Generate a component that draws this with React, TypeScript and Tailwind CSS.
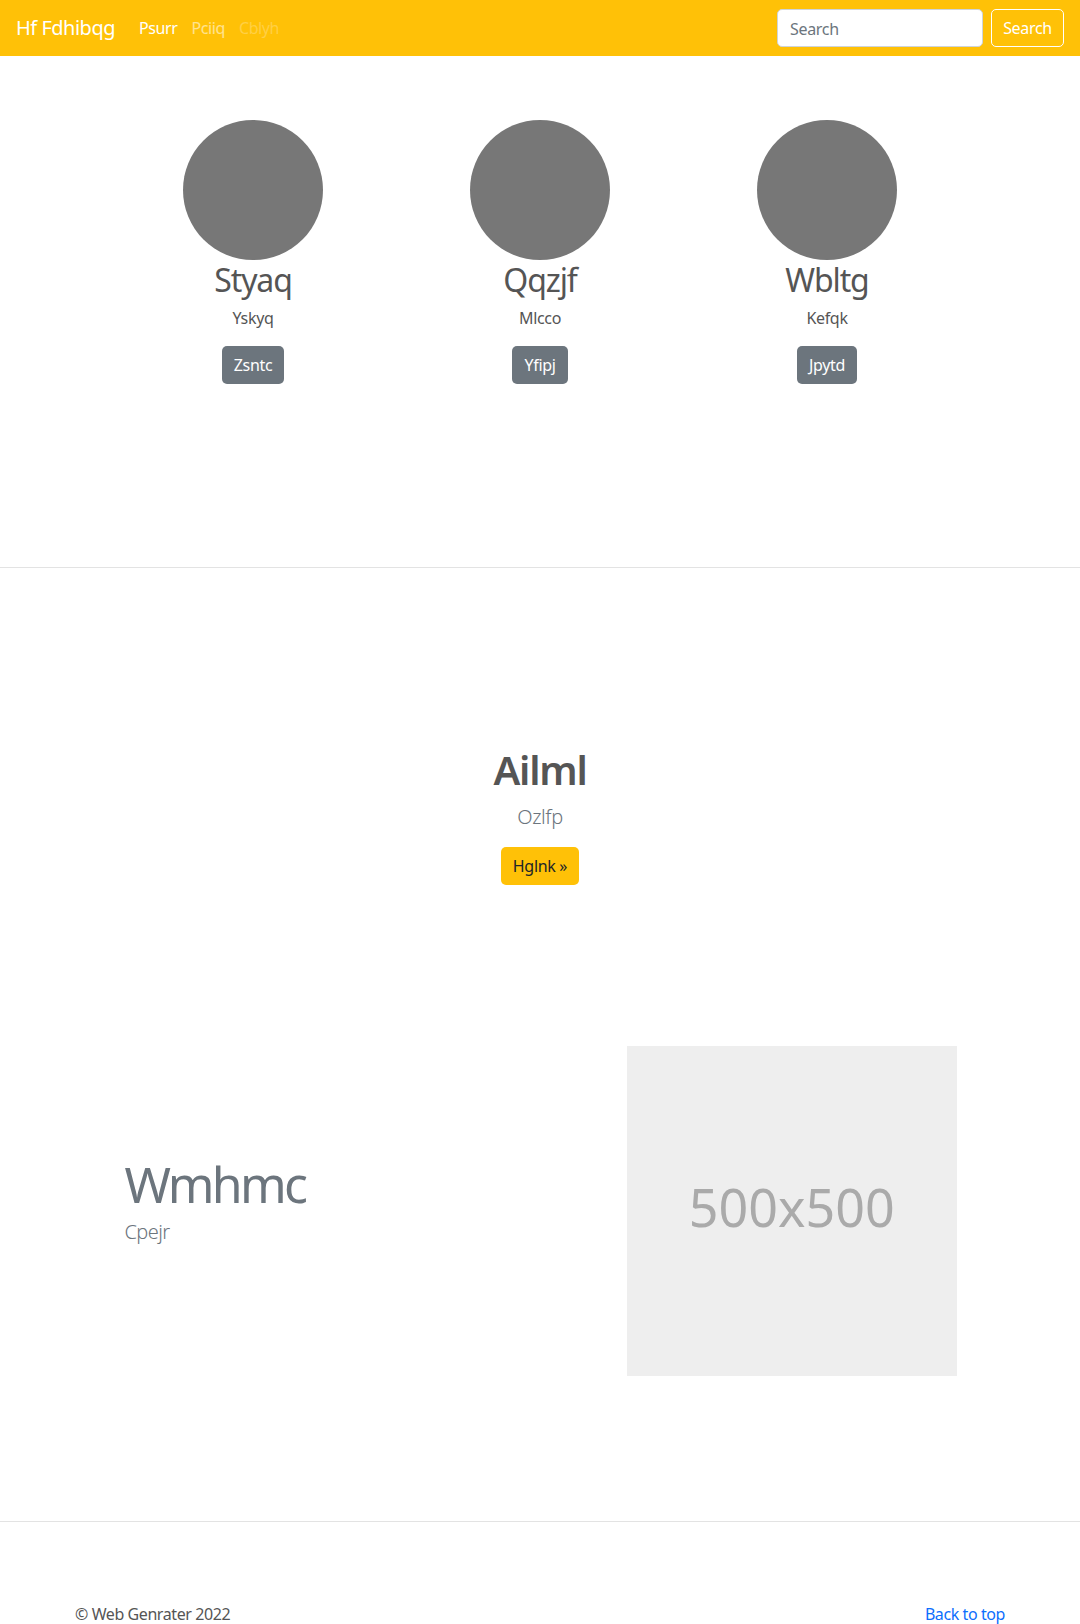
import React from "react";

const font = { fontFamily: '"Noto Sans", "Open Sans", sans-serif' };

function Member({ name, role, btn }: { name: string; role: string; btn: string }) {
  return (
    <div className="flex flex-col items-center">
      <div className="w-[140px] h-[140px] rounded-full bg-[#777777]" />
      <h2 className="text-[32px] leading-[1.2] font-normal text-[#555555] tracking-[-0.035em] mt-[1px] mb-[7px]">{name}</h2>
      <p className="text-[16px] leading-[1.5] text-[#555555] tracking-[-0.02em] mb-4">{role}</p>
      <button className="h-[38px] px-3 rounded-[5px] bg-[#6c757d] text-white text-[16px] leading-[1.5] tracking-[-0.02em]">
        {btn}
      </button>
    </div>
  );
}

export default function App() {
  return (
    <div className="bg-white min-h-[1624px] text-[#555555]" style={font}>
      <nav className="h-[56px] bg-[#ffc107] flex items-center px-4">
        <span className="text-[20px] text-white mr-4 leading-[1.5] tracking-[-0.025em]">Hf Fdhibqg</span>
        <div className="flex text-[16px] tracking-[-0.025em]">
          <span className="pl-2 pr-[7px] text-white">Psurr</span>
          <span className="px-[7px] text-white/55">Pciiq</span>
          <span className="px-[7px] text-white/25">Cblyh</span>
        </div>
        <div className="ml-auto flex items-center gap-2">
          <input
            placeholder="Search"
            className="w-[206px] h-[38px] rounded-[5px] border border-[#ced4da] bg-white px-3 pt-[2px] text-[16px] tracking-[-0.02em] text-[#212529] placeholder:text-[#6c757d] outline-none"
          />
          <button className="h-[38px] w-[73px] rounded-[5px] border border-white text-white text-[16px] tracking-[-0.02em]">
            Search
          </button>
        </div>
      </nav>

      <section className="pt-[64px]">
        <div className="w-[861px] mx-auto grid grid-cols-3 text-center">
          <Member name="Styaq" role="Yskyq" btn="Zsntc" />
          <Member name="Qqzjf" role="Mlcco" btn="Yfipj" />
          <Member name="Wbltg" role="Kefqk" btn="Jpytd" />
        </div>
      </section>

      <hr className="mt-[183px] border-0 border-t border-[#e3e3e3]" />

      <section className="pt-[178px] flex flex-col items-center text-center">
        <h1 className="text-[40px] leading-[1.2] font-semibold text-[#555555] tracking-[-0.03em] mb-2">Ailml</h1>
        <p className="text-[20px] leading-[1.5] font-light text-[#6c757d] tracking-[-0.02em] mb-[15px]">Ozlfp</p>
        <button className="h-[38px] px-3 rounded-[5px] bg-[#ffc107] text-[#212529] text-[16px] tracking-[-0.02em]">
          Hglnk »
        </button>
      </section>

      <section className="mt-[161px]">
        <div className="w-[861px] mx-auto grid grid-cols-12 items-center">
          <div className="col-span-7 px-[15px]">
            <h2 className="text-[50px] leading-none font-normal text-[#6c757d] tracking-[-2.7px] mb-2">Wmhmc</h2>
            <p className="text-[20px] leading-[1.5] font-light text-[#6c757d] tracking-[-0.03em] mb-4">Cpejr</p>
          </div>
          <div className="col-span-5 px-[15px]">
            <div className="w-[330px] h-[330px] bg-[#eeeeee] flex items-center justify-center">
              <span className="text-[52px] leading-none text-[#aaaaaa] mb-[8px]">500x500</span>
            </div>
          </div>
        </div>
      </section>

      <hr className="mt-[145px] border-0 border-t border-[#e3e3e3]" />

      <footer className="pt-[80px]">
        <div className="w-[960px] mx-auto px-3 flex justify-between text-[16px] leading-[1.5] tracking-[-0.026em]">
          <span className="text-[#555555] pl-[3px]">© Web Genrater 2022</span>
          <span className="text-[#0d6efd] pr-[3px]">Back to top</span>
        </div>
      </footer>
    </div>
  );
}
